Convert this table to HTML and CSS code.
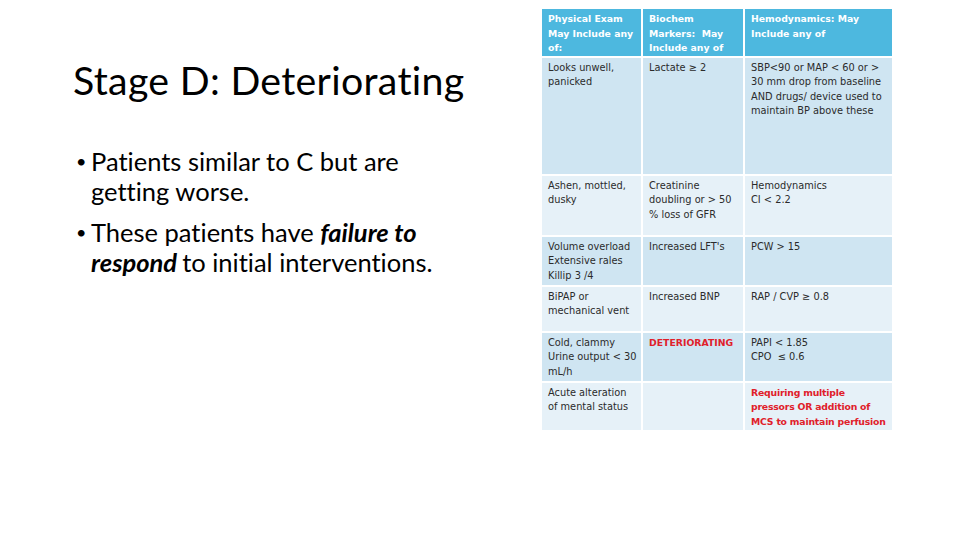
FILE: index.html
```html
<!DOCTYPE html>
<html>
<head>
<meta charset="utf-8">
<link rel="stylesheet" href="styles.css">
</head>
<body>
<div class="slide">
  <div class="left">
    <h1 class="title">Stage D: Deteriorating</h1>
    <ul class="bullets">
      <li>Patients similar to C but are getting worse.</li>
      <li>These patients have <em>failure to</em><br><em class="gap">respond</em>to initial interventions.</li>
    </ul>
  </div>
  <div class="right">
    <table class="grid">
      <colgroup>
        <col class="c1">
        <col class="c2">
        <col class="c3">
      </colgroup>
      <tr class="head">
        <th>Physical Exam May Include any of:</th>
        <th>Biochem Markers:&nbsp; May Include any of</th>
        <th>Hemodynamics: May Include any of</th>
      </tr>
      <tr class="r1 dark">
        <td>Looks unwell,<br>panicked</td>
        <td>Lactate ≥ 2</td>
        <td>SBP&lt;90 or MAP &lt; 60 or &gt;<br>30 mm drop from baseline<br>AND drugs/ device used to<br>maintain BP above these</td>
      </tr>
      <tr class="r2 light">
        <td>Ashen, mottled,<br>dusky</td>
        <td>Creatinine<br>doubling or &gt; 50<br>% loss of GFR</td>
        <td>Hemodynamics<br>CI &lt; 2.2</td>
      </tr>
      <tr class="r3 dark">
        <td>Volume overload<br>Extensive rales<br>Killip 3 /4</td>
        <td>Increased LFT's</td>
        <td>PCW &gt; 15</td>
      </tr>
      <tr class="r4 light">
        <td>BiPAP or<br>mechanical vent</td>
        <td>Increased BNP</td>
        <td>RAP / CVP ≥ 0.8</td>
      </tr>
      <tr class="r5 dark">
        <td>Cold, clammy<br>Urine output &lt; 30<br>mL/h</td>
        <td class="red">DETERIORATING</td>
        <td>PAPI &lt; 1.85<br>CPO&nbsp; ≤ 0.6</td>
      </tr>
      <tr class="r6 light">
        <td>Acute alteration<br>of mental status</td>
        <td></td>
        <td class="red tight">Requiring multiple<br>pressors OR addition of<br>MCS to maintain perfusion</td>
      </tr>
    </table>
  </div>
</div>
</body>
</html>
```
FILE: styles.css
```css
html, body {
  margin: 0;
  padding: 0;
  background: #ffffff;
}
.slide {
  width: 960px;
  height: 540px;
  display: flex;
  font-family: "Lato", "Liberation Sans", sans-serif;
  font-variant-ligatures: none;
  color: #000;
}
.left {
  width: 540px;
  box-sizing: border-box;
  padding: 56px 0 0 73px;
}
.title {
  margin: 0;
  font-weight: 400;
  font-size: 39.3px;
  line-height: 48px;
  letter-spacing: 0.3px;
}
.bullets {
  list-style: none;
  margin: 42px 0 0 0;
  padding: 0;
  width: 370px;
}
.bullets li {
  position: relative;
  padding-left: 18px;
  font-size: 25.5px;
  line-height: 30px;
  margin-bottom: 11px;
}
.bullets li::before {
  content: "•";
  position: absolute;
  left: 3px;
  top: 0;
  font-size: 18px;
}
.bullets em {
  font-style: italic;
  font-weight: 700;
}
.bullets em.gap {
  margin-right: 5px;
}
.right {
  padding-top: 7px;
}
.grid {
  border-collapse: collapse;
  width: 352px;
  table-layout: fixed;
  font-family: "DejaVu Sans", sans-serif;
  font-size: 9.8px;
  line-height: 14.5px;
  color: #2b2b2b;
}
.grid col.c1 { width: 101px; }
.grid col.c2 { width: 102px; }
.grid col.c3 { width: 149px; }
.grid th, .grid td {
  border: 2px solid #ffffff;
  vertical-align: top;
  text-align: left;
  padding: 3px 2px 0 6px;
  overflow: hidden;
}
.grid td {
  white-space: nowrap;
}
.grid th {
  background: #4db8df;
  color: #ffffff;
  font-weight: 700;
  font-size: 9.3px;
}
.grid tr.head { height: 48px; }
.grid tr.r1 { height: 118px; }
.grid tr.r2 { height: 61px; }
.grid tr.r3 { height: 50px; }
.grid tr.r4 { height: 46px; }
.grid tr.r5 { height: 50px; }
.grid tr.r6 { height: 49px; }
.grid tr.dark td { background: #cfe5f2; }
.grid tr.light td { background: #e6f1f8; }
.grid td.red {
  color: #e0202a;
  font-weight: 700;
  font-size: 9.3px;
}
.grid td.tight {
  letter-spacing: -0.2px;
}
```
